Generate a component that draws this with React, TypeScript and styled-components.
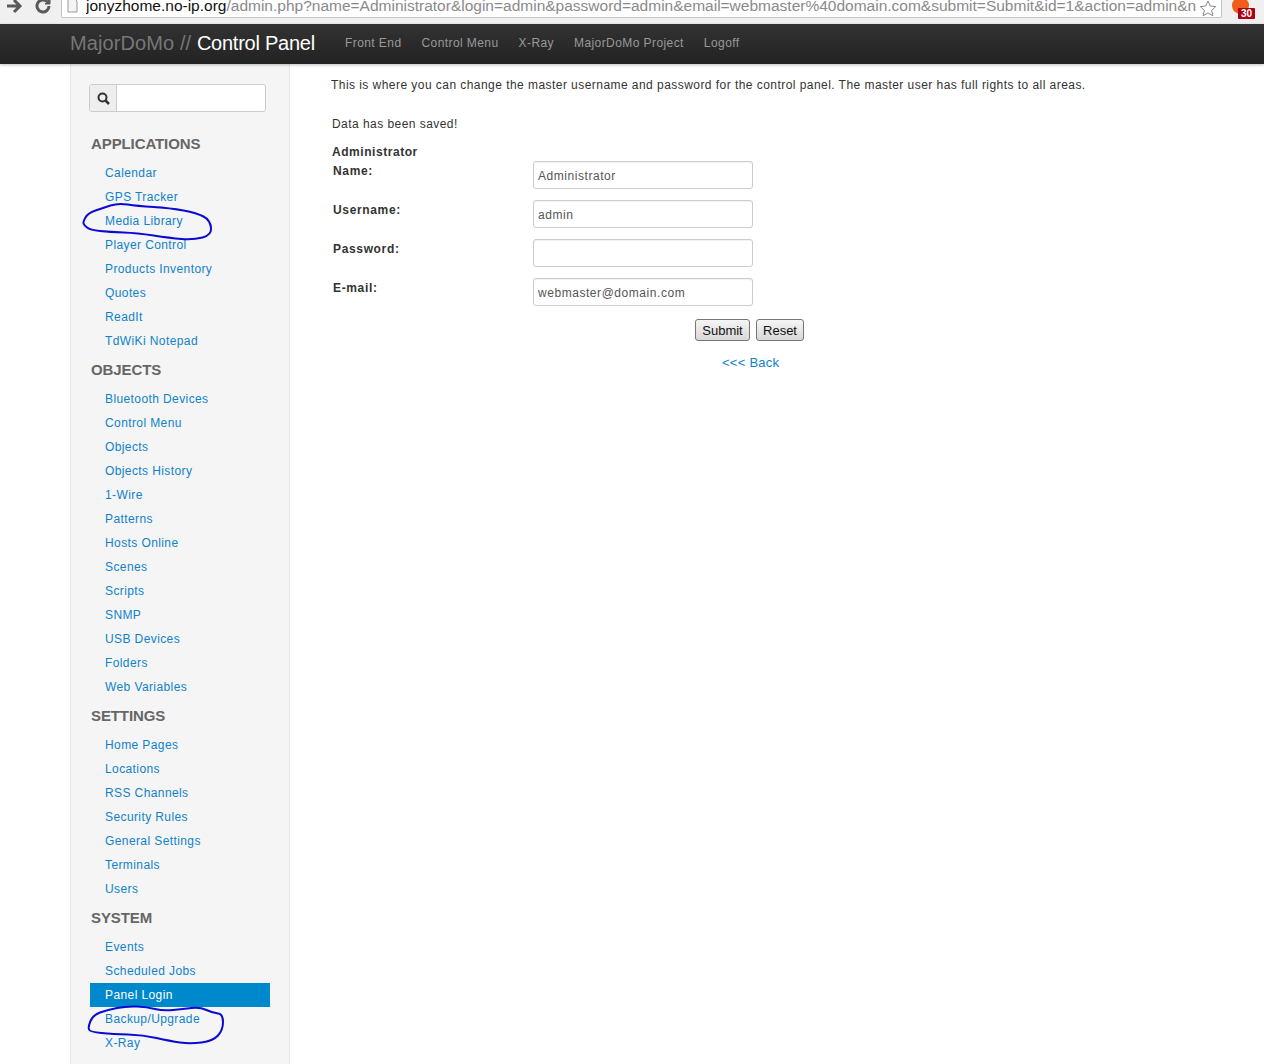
import React from "react";
import styled, { createGlobalStyle } from "styled-components";

const Global = createGlobalStyle`
  html, body { margin: 0; padding: 0; background: #fff; }
  body { font-family: "Liberation Sans", Arial, sans-serif; font-size: 13px; color: #333; overflow: hidden; }
`;
const Page = styled.div`position: relative; width: 1264px; height: 1064px; overflow: hidden;`;
const Chrome = styled.div`
  height: 24px; background: #f0f0f0; display: flex; align-items: flex-start; box-sizing: border-box; position: relative;
`;
const ChromeIcon = styled.svg<{ $gap: number }>`width: 18px; height: 18px; flex: none; margin-top: -3px; margin-left: ${p => p.$gap}px; color: #5a5a5a;`;
const Omnibox = styled.div`
  margin-left: 9px; width: 1161px; height: 18px; box-sizing: border-box; background: #fff;
  border: 1px solid #c4c4c4; border-top: 0; border-radius: 0 0 2px 2px; display: flex; align-items: flex-start; overflow: hidden;
  font-size: 15.5px; line-height: 14px; white-space: nowrap; color: #8a8a8a; padding-left: 5px; flex: none;
`;
const Host = styled.span`color: #111;`;
const UrlText = styled.span`overflow: hidden; width: 1110px; flex: none; margin: -1px 0 0 8px; height: 18px;`;
const Star = styled.svg`flex: none; margin-left: 3px;`;
const DocIcon = styled.svg`flex: none;`;
const Badge = styled.div`
  position: absolute; left: 1238px; top: 8px; width: 17px; height: 11px; background: #a90016; color: #fff;
  font: bold 10px/11px "Liberation Sans", sans-serif; text-align: center; border-radius: 1px;
`;
const OrangeDot = styled.div`position: absolute; left: 1232px; top: -3px; width: 17px; height: 17px; border-radius: 50%; background: #f25c1a;`;
const Navbar = styled.div`
  height: 40px; box-sizing: border-box; padding: 0 0 2px 70px; background: linear-gradient(#333333, #222222); display: flex; align-items: center;
  box-shadow: 0 1px 3px rgba(0,0,0,.25); position: relative;
`;
const Brand = styled.div`font-size: 20px; color: #777; width: 275px; flex: none; white-space: nowrap; letter-spacing: 0.1px;`;
const BrandStrong = styled.span`color: #fff; letter-spacing: -0.25px;`;
const NavLink = styled.a`font-size: 12px; color: #999; margin-right: 20px; white-space: nowrap; letter-spacing: 0.42px;`;
const Body = styled.div`display: flex; padding-left: 70px; height: 1000px;`;
const Sidebar = styled.div`
  width: 220px; flex: none; box-sizing: border-box; background: #f5f5f5; border: 1px solid #e6e6e6; border-width: 0 1px;
  padding: 20px 19px 0 19px;
`;
const Search = styled.div`display: flex; margin-left: -1px; margin-bottom: 22px; width: 177px; height: 28px; box-sizing: border-box; border: 1px solid #ccc; border-radius: 3px; background: #fff; overflow: hidden;`;
const SearchAddon = styled.div`width: 26px; background: #eee; border-right: 1px solid #ccc; display: flex; align-items: center; justify-content: center; color: #333;`;
const NavHeader = styled.div`
  font-size: 15px; line-height: 20px; font-weight: bold; color: #666; height: 27px; padding-left: 1px;
  letter-spacing: -0.1px; text-transform: uppercase;
`;
const NavGroup = styled.div`margin-top: 7px;`;
const NavItem = styled.a<{ $active?: boolean }>`
  display: block; width: 180px; height: 24px; line-height: 24px; padding-left: 15px; box-sizing: border-box; font-size: 12px; letter-spacing: 0.4px;
  color: ${p => (p.$active ? "#fff" : "#0f82cc")};
  background: ${p => (p.$active ? "#0088cc" : "transparent")};
`;
const Main = styled.div`flex: 1; padding: 13px 0 0 41px; font-size: 12px; color: #333; letter-spacing: 0.45px;`;
const Intro = styled.p`margin: 0; line-height: 16px;`;
const Saved = styled.p`margin: 23px 0 0 1px; line-height: 16px;`;
const FormTitle = styled.div`margin: 12px 0 0 1px; line-height: 16px; font-weight: bold; letter-spacing: 0.55px;`;
const Form = styled.div`display: grid; grid-template-columns: 200px 220px; row-gap: 11px; margin: 1px 0 0 2px; align-items: start;`;
const Label = styled.label`font-weight: bold; line-height: 16px; letter-spacing: 0.65px; padding-top: 2px;`;
const Input = styled.input`
  width: 220px; height: 28px; box-sizing: border-box; border: 1px solid #ccc; border-radius: 3px; padding: 2px 4px 0; color: #555;
  font: 12px "Liberation Sans", sans-serif; letter-spacing: 0.55px; box-shadow: inset 0 1px 1px rgba(0,0,0,.06);
`;
const Buttons = styled.div`display: flex; gap: 6px; margin: 13px 0 0 364px;`;
const Btn = styled.button<{ $w: number }>`
  width: ${p => p.$w}px; height: 22px; padding: 0; box-sizing: border-box; border: 1px solid #767676; border-radius: 3px;
  background: linear-gradient(#f5f5f5, #d8d8d8); color: #111; font: 13px "Liberation Sans", sans-serif;
`;
const Back = styled.a`display: block; margin: 14px 0 0 391px; color: #0f82cc; font-size: 13px; line-height: 16px; letter-spacing: 0.25px;`;
const Scribble = styled.svg`position: absolute; left: 0; top: 0; width: 1264px; height: 1064px; pointer-events: none;`;

const groups: [string, string[]][] = [
  ["Applications", ["Calendar","GPS Tracker","Media Library","Player Control","Products Inventory","Quotes","ReadIt","TdWiKi Notepad"]],
  ["Objects", ["Bluetooth Devices","Control Menu","Objects","Objects History","1-Wire","Patterns","Hosts Online","Scenes","Scripts","SNMP","USB Devices","Folders","Web Variables"]],
  ["Settings", ["Home Pages","Locations","RSS Channels","Security Rules","General Settings","Terminals","Users"]],
  ["System", ["Events","Scheduled Jobs","Panel Login","Backup/Upgrade","X-Ray"]],
];

const smooth = (pts: number[][]) => {
  const mid = (a: number[], b: number[]) => [(a[0] + b[0]) / 2, (a[1] + b[1]) / 2];
  const s = mid(pts[pts.length - 1], pts[0]);
  let d = `M${s[0]} ${s[1]}`;
  pts.forEach((p, i) => {
    const m = mid(p, pts[(i + 1) % pts.length]);
    d += `Q${p[0]} ${p[1]} ${m[0]} ${m[1]}`;
  });
  return d + "Z";
};
const mediaLoop = [[83,222],[88,213],[103,208],[118,203],[137,206],[170,208],[197,213],[210,220],[212,235],[193,240],[170,238],[137,233],[110,232],[90,230],[84,225]];
const backupLoop = [[88,1027],[93,1015],[107,1010],[127,1006],[147,1007],[163,1011],[183,1009],[200,1007],[213,1013],[223,1014],[223,1030],[213,1041],[190,1044],[170,1041],[143,1035],[113,1034],[90,1032]];

export default function App() {
  return (
    <Page>
      <Global />
      <Chrome>
        <ChromeIcon $gap={5} viewBox="0 0 18 18" fill="none" stroke="currentColor" strokeWidth="3"><path d="M2 9h12M9 3l6 6-6 6" /></ChromeIcon>
        <ChromeIcon $gap={11} viewBox="0 0 18 18" fill="none" stroke="currentColor" strokeWidth="3"><path d="M15 9a6 6 0 1 1-2-4.500" /><path d="M16 2v5h-5z" fill="currentColor" strokeWidth="1" /></ChromeIcon>
        <Omnibox>
          <DocIcon width="11" height="14" viewBox="0 0 11 14" fill="#f4f4f4" stroke="#999"><path d="M1 -2h6l3 3v11H1z" /></DocIcon>
          <UrlText><Host>jonyzhome.no-ip.org</Host>/admin.php?name=Administrator&amp;login=admin&amp;password=admin&amp;email=webmaster%40domain.com&amp;submit=Submit&amp;id=1&amp;action=admin&amp;n</UrlText>
          <Star width="18" height="17" viewBox="0 0 18 17" fill="#fff" stroke="#888"><path d="M9 1l2.300 5 5.400.6-4 3.700 1.100 5.400L9 13l-4.800 2.700 1.100-5.400-4-3.700L6.700 6z" /></Star>
        </Omnibox>
        <OrangeDot />
        <Badge>30</Badge>
      </Chrome>
      <Navbar>
        <Brand>MajorDoMo // <BrandStrong>Control Panel</BrandStrong></Brand>
        <NavLink>Front End</NavLink>
        <NavLink>Control Menu</NavLink>
        <NavLink>X-Ray</NavLink>
        <NavLink>MajorDoMo Project</NavLink>
        <NavLink>Logoff</NavLink>
      </Navbar>
      <Body>
        <Sidebar>
          <Search>
            <SearchAddon>
              <svg width="13" height="13" viewBox="0 0 13 13" fill="none" stroke="#333" strokeWidth="2"><circle cx="5.500" cy="5.500" r="4" /><path d="M8.500 8.500l3.500 3.500" strokeWidth="2.500" /></svg>
            </SearchAddon>
          </Search>
          {groups.map(([h, items]) => (
            <NavGroup key={h}>
              <NavHeader>{h}</NavHeader>
              {items.map(i => <NavItem key={i} $active={i === "Panel Login"}>{i}</NavItem>)}
            </NavGroup>
          ))}
        </Sidebar>
        <Main>
          <Intro>This is where you can change the master username and password for the control panel. The master user has full rights to all areas.</Intro>
          <Saved>Data has been saved!</Saved>
          <FormTitle>Administrator</FormTitle>
          <Form>
            <Label>Name:</Label><Input defaultValue="Administrator" />
            <Label>Username:</Label><Input defaultValue="admin" />
            <Label>Password:</Label><Input />
            <Label>E-mail:</Label><Input defaultValue="webmaster@domain.com" />
          </Form>
          <Buttons><Btn $w={55}>Submit</Btn><Btn $w={48}>Reset</Btn></Buttons>
          <Back>&lt;&lt;&lt; Back</Back>
        </Main>
      </Body>
      <Scribble viewBox="0 0 1264 1064" fill="none" stroke="#0a0ad2" strokeWidth="2">
        <path d={smooth(mediaLoop)} />
        <path d={smooth(backupLoop)} />
      </Scribble>
    </Page>
  );
}
